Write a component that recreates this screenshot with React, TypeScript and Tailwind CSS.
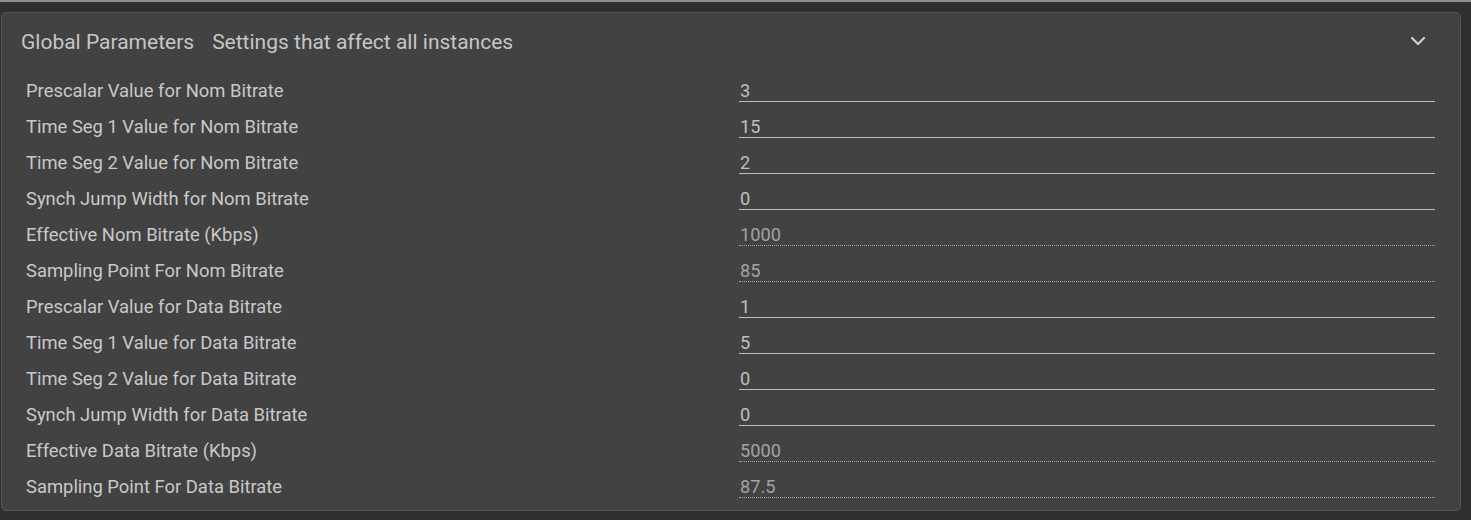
import { ChevronDown } from "lucide-react"

interface ParamRow {
  label: string
  value: string
  readOnly?: boolean
}

const rows: ParamRow[] = [
  { label: "Prescalar Value for Nom Bitrate", value: "3" },
  { label: "Time Seg 1 Value for Nom Bitrate", value: "15" },
  { label: "Time Seg 2 Value for Nom Bitrate", value: "2" },
  { label: "Synch Jump Width for Nom Bitrate", value: "0" },
  { label: "Effective Nom Bitrate (Kbps)", value: "1000", readOnly: true },
  { label: "Sampling Point For Nom Bitrate", value: "85", readOnly: true },
  { label: "Prescalar Value for Data Bitrate", value: "1" },
  { label: "Time Seg 1 Value for Data Bitrate", value: "5" },
  { label: "Time Seg 2 Value for Data Bitrate", value: "0" },
  { label: "Synch Jump Width for Data Bitrate", value: "0" },
  { label: "Effective Data Bitrate (Kbps)", value: "5000", readOnly: true },
  { label: "Sampling Point For Data Bitrate", value: "87.5", readOnly: true },
]

export default function App() {
  return (
    <div
      className="min-h-[520px] w-[1471px] bg-[#2f2f2f]"
      style={{ fontFamily: "Roboto, 'Liberation Sans', sans-serif" }}
    >
      <div className="h-[2px] bg-[#8f8f8f]" />
      <section className="ml-px mt-[10px] w-[1460px] rounded-[5px] border border-[#555555] bg-[#424242]">
        <header className="flex h-[58px] items-center justify-between pb-[3px] pl-[19px] pr-[30px]">
          <div className="mt-[2px] flex items-center gap-[18px] text-[21px] leading-7 text-[#c6c6c6]">
            <span>Global Parameters</span>
            <span>Settings that affect all instances</span>
          </div>
          <ChevronDown className="h-6 w-6 text-[#cfcfcf]" strokeWidth={2.2} />
        </header>
        <div className="px-6 pb-[6px] pt-px">
          {rows.map((row) => (
            <div className="grid h-9 grid-cols-[713px_1fr] items-center" key={row.label}>
              <span className="mt-[2px] text-[18.4px] leading-6 text-[#c9c9c9]">{row.label}</span>
              <div
                className={`mr-px flex h-[30px] items-end self-start pl-px ${
                  row.readOnly
                    ? "border-b border-dotted border-[#a8a8a8] text-[#a3a3a3]"
                    : "border-b border-[#bdbdbd] text-[#bfbfbf]"
                }`}
              >
                <span className="text-[18.2px] leading-[21px]">{row.value}</span>
              </div>
            </div>
          ))}
        </div>
      </section>
    </div>
  )
}
